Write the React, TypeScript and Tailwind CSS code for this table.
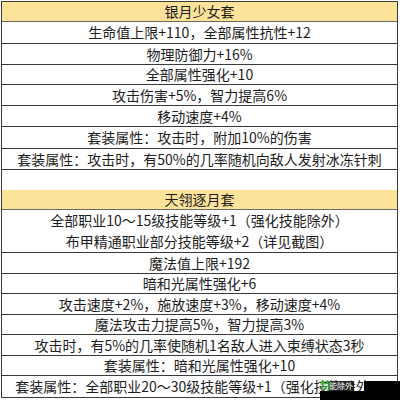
const rows: { text: string[]; h: string; kind?: 'head' | 'blank' }[] = [
  { text: ['银月少女套'], h: 'h-[20px]', kind: 'head' },
  { text: ['生命值上限+110，全部属性抗性+12'], h: 'h-[22px]' },
  { text: ['物理防御力+16%'], h: 'h-[21px]' },
  { text: ['全部属性强化+10'], h: 'h-[20px]' },
  { text: ['攻击伤害+5%，智力提高6%'], h: 'h-[21px]' },
  { text: ['移动速度+4%'], h: 'h-[21px]' },
  { text: ['套装属性：攻击时，附加10%的伤害'], h: 'h-[22px]' },
  { text: ['套装属性：攻击时，有50%的几率随机向敌人发射冰冻针刺'], h: 'h-[21px]' },
  { text: [], h: 'h-[20px]', kind: 'blank' },
  { text: ['天翎逐月套'], h: 'h-[20px]', kind: 'head' },
  { text: ['全部职业10～15级技能等级+1（强化技能除外）', '布甲精通职业部分技能等级+2（详见截图）'], h: 'h-[43px]' },
  { text: ['魔法值上限+192'], h: 'h-[21px]' },
  { text: ['暗和光属性强化+6'], h: 'h-[20px]' },
  { text: ['攻击速度+2%，施放速度+3%，移动速度+4%'], h: 'h-[21px]' },
  { text: ['魔法攻击力提高5%，智力提高3%'], h: 'h-[20px]' },
  { text: ['攻击时，有5%的几率使随机1名敌人进入束缚状态3秒'], h: 'h-[21px]' },
  { text: ['套装属性：暗和光属性强化+10'], h: 'h-[20px]' },
  { text: ['套装属性：全部职业20～30级技能等级+1（强化技能除外）'], h: 'h-[22px]' },
]

export default function App() {
  return (
    <div
      className="relative w-[400px] h-[400px] bg-white overflow-hidden text-[14px] text-[#1c1c1c]"
      style={{ fontFamily: '"Noto Sans CJK SC", "Noto Sans", sans-serif' }}
    >
      {/* table */}
      <div className="ml-px mt-px w-[397px] border-t border-l border-r border-[#3a3a3a]">
        {rows.map((r, i) => (
          <div
            key={i}
            className={
              r.h +
              ' flex flex-col items-center justify-center leading-[21px] ' +
              (r.kind === 'head'
                ? 'bg-[#fde39a] border-b border-[#6a6a6a]'
                : r.kind === 'blank'
                ? ''
                : 'border-b border-[#3a3a3a]')
            }
          >
            {r.text.map((t, j) => (
              <span key={j} className="whitespace-nowrap">{t}</span>
            ))}
          </div>
        ))}
      </div>

      {/* watermark */}
      <div className="absolute left-[320px] top-[391px] w-[80px] h-[9px] bg-black" />
      <div className="absolute left-[364px] top-[381px] w-[36px] h-[19px] bg-black" />
      <div className="absolute left-[328px] top-[381px] h-[10px] px-px bg-[#222] text-[8px] leading-[10px] text-white whitespace-nowrap">能除外</div>
      <div className="absolute left-[320px] top-[379px] text-[11px] leading-[12px] font-bold text-[#3fa535]">特</div>
    </div>
  )
}
